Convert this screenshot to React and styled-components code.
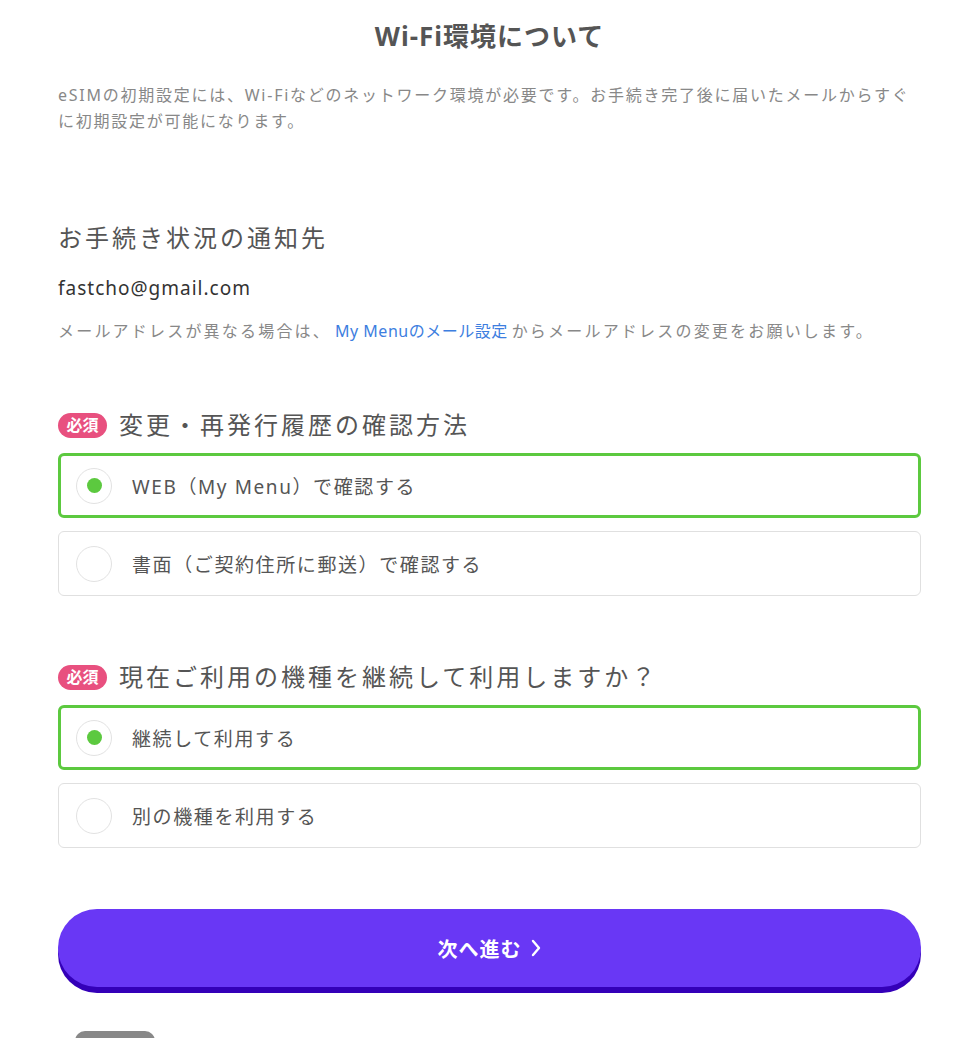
import React, { useState } from 'react';
import styled, { createGlobalStyle } from 'styled-components';

const GlobalStyle = createGlobalStyle`
  body {
    margin: 0;
    background: #fff;
    font-family: "Noto Sans", "Noto Sans CJK JP", sans-serif;
    color: #555;
  }
`;

const Page = styled.div`
  padding: 16px 43px 0 58px;
  height: 1038px;
  overflow: hidden;
  box-sizing: border-box;
`;

const Title = styled.h1`
  margin: 0;
  text-align: center;
  font-size: 26px;
  font-weight: 700;
  color: #555;
  line-height: 40px;
  letter-spacing: 1px;
`;

const Lead = styled.p`
  margin: 26px 0 0;
  font-size: 16px;
  line-height: 26px;
  color: #888;
  letter-spacing: 1.75px;
`;

const Section = styled.section`
  margin-top: ${(p) => p.$top}px;
`;

const Heading = styled.h2`
  margin: 0;
  display: flex;
  align-items: center;
  gap: 12px;
  font-size: 24px;
  font-weight: 400;
  color: #555;
  line-height: 36px;
  letter-spacing: 3px;
`;

const Badge = styled.span`
  display: inline-flex;
  align-items: center;
  justify-content: center;
  width: 49px;
  height: 25px;
  border-radius: 13px;
  background: #e8507f;
  color: #fff;
  font-size: 16px;
  font-weight: 700;
  letter-spacing: 0;
`;

const Email = styled.div`
  margin-top: 18px;
  font-size: 19px;
  color: #333;
  line-height: 28px;
  letter-spacing: 1px;
`;

const Note = styled.p`
  margin: 17px 0 0;
  font-size: 16px;
  color: #888;
  line-height: 24px;
  letter-spacing: 2.2px;
  a {
    color: #3d7ee0;
    text-decoration: none;
    margin: 0 4px;
    letter-spacing: 0.5px;
  }
`;

const Options = styled.div`
  margin-top: 10px;
  display: flex;
  flex-direction: column;
  gap: 13px;
`;

const Option = styled.label`
  display: flex;
  align-items: center;
  gap: 20px;
  height: 65px;
  box-sizing: border-box;
  padding-left: ${(p) => (p.$checked ? 15 : 17)}px;
  border: ${(p) => (p.$checked ? '3px solid #5cc93f' : '1px solid #e0e0e0')};
  border-radius: 6px;
  cursor: pointer;
  font-size: 19px;
  color: #555;
  letter-spacing: 1.6px;
`;

const Radio = styled.span`
  width: 34px;
  height: 34px;
  border-radius: 50%;
  border: 1px solid #e2e2e2;
  display: flex;
  align-items: center;
  justify-content: center;
  flex-shrink: 0;
  &::after {
    content: '';
    width: 15px;
    height: 15px;
    border-radius: 50%;
    background: ${(p) => (p.$checked ? '#5cc93f' : 'transparent')};
  }
`;

const NextButton = styled.button`
  margin-top: 61px;
  width: 100%;
  height: 78px;
  border: none;
  border-radius: 40px;
  background: #6937f5;
  box-shadow: 0 6px 0 #3400b8;
  color: #fff;
  font-family: inherit;
  font-size: 20px;
  font-weight: 700;
  letter-spacing: 1px;
  display: flex;
  align-items: center;
  justify-content: center;
  gap: 8px;
  cursor: pointer;
`;

const Peek = styled.div`
  margin: 44px 0 0 17px;
  width: 80px;
  height: 20px;
  border-radius: 10px 10px 0 0;
  background: #888;
`;

function Chevron() {
  return (
    <svg width="12" height="18" viewBox="0 0 12 18" fill="none">
      <path d="M3 2l6 7-6 7" stroke="#fff" strokeWidth="2.4" strokeLinecap="round" strokeLinejoin="round" />
    </svg>
  );
}

function Choice({ options, value, onChange }) {
  return (
    <Options>
      {options.map((o) => (
        <Option key={o} $checked={value === o} onClick={() => onChange(o)}>
          <Radio $checked={value === o} />
          {o}
        </Option>
      ))}
    </Options>
  );
}

export default function App() {
  const [history, setHistory] = useState('WEB（My Menu）で確認する');
  const [device, setDevice] = useState('継続して利用する');

  return (
    <Page>
      <GlobalStyle />
      <Title>Wi-Fi環境について</Title>
      <Lead>
        eSIMの初期設定には、Wi-Fiなどのネットワーク環境が必要です。お手続き完了後に届いたメールからすぐに初期設定が可能になります。
      </Lead>

      <Section $top={86}>
        <Heading>お手続き状況の通知先</Heading>
        <Email>fastcho@gmail.com</Email>
        <Note>
          メールアドレスが異なる場合は、<a href="#">My Menuのメール設定</a>からメールアドレスの変更をお願いします。
        </Note>
      </Section>

      <Section $top={64}>
        <Heading>
          <Badge>必須</Badge>変更・再発行履歴の確認方法
        </Heading>
        <Choice
          options={['WEB（My Menu）で確認する', '書面（ご契約住所に郵送）で確認する']}
          value={history}
          onChange={setHistory}
        />
      </Section>

      <Section $top={63}>
        <Heading>
          <Badge>必須</Badge>現在ご利用の機種を継続して利用しますか？
        </Heading>
        <Choice options={['継続して利用する', '別の機種を利用する']} value={device} onChange={setDevice} />
      </Section>

      <NextButton>
        次へ進む <Chevron />
      </NextButton>
      <Peek />
    </Page>
  );
}
